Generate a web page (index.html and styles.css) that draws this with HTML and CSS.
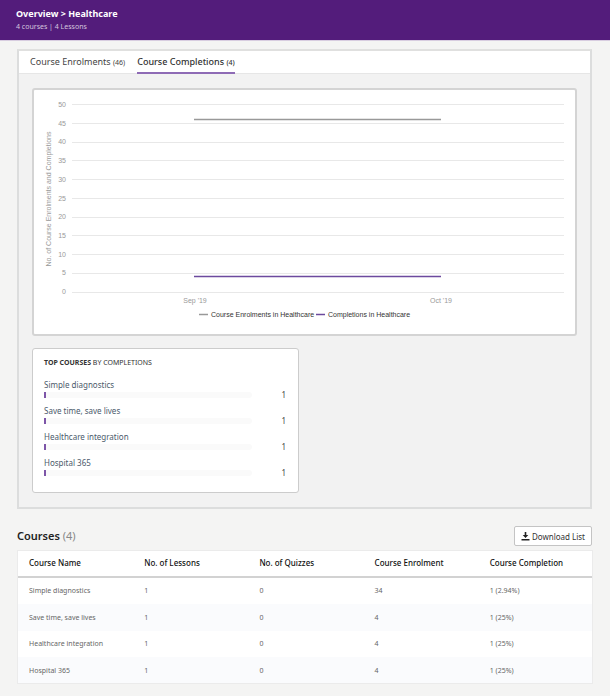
FILE: index.html
```html
<!DOCTYPE html>
<html lang="en">
<head>
<meta charset="utf-8">
<meta name="viewport" content="width=device-width, initial-scale=1">
<title>Overview &gt; Healthcare</title>
<link rel="stylesheet" href="styles.css">
</head>
<body>
<header class="page-header">
  <h1 class="page-title">Overview &gt; Healthcare</h1>
  <p class="page-meta">4 courses | 4 Lessons</p>
</header>
<main class="content">
  <section class="panel">
    <div class="tabs" role="tablist">
      <button class="tab" type="button" role="tab" aria-selected="false">Course Enrolments <small>(46)</small></button>
      <button class="tab tab-active" type="button" role="tab" aria-selected="true">Course Completions <small>(4)</small></button>
    </div>
    <div class="panel-body">
      <div class="card">
        <svg class="chart" viewBox="0 0 541 244" role="img" aria-label="Course enrolments and completions by month">
          <g class="grid">
            <path d="M38 14.5H530M38 33.5H530M38 52.5H530M38 70.5H530M38 89.5H530M38 108.5H530M38 127.5H530M38 145.5H530M38 164.5H530M38 183.5H530M38 202.5H530"/>
          </g>
          <g class="axis" text-anchor="end">
            <text x="32" y="17">50</text>
            <text x="32" y="36">45</text>
            <text x="32" y="54">40</text>
            <text x="32" y="73">35</text>
            <text x="32" y="92">30</text>
            <text x="32" y="111">25</text>
            <text x="32" y="129">20</text>
            <text x="32" y="148">15</text>
            <text x="32" y="167">10</text>
            <text x="32" y="185">5</text>
            <text x="32" y="204">0</text>
          </g>
          <g class="axis" text-anchor="middle">
            <text x="161" y="213">Sep '19</text>
            <text x="407" y="213">Oct '19</text>
            <text transform="translate(17 109) rotate(-90)">No. of Course Enrolments and Completions</text>
          </g>
          <path class="line-enrol" d="M160 29.5H407"/>
          <path class="line-complete" d="M160 186.5H407"/>
          <path class="line-enrol" d="M165 224.5H174"/>
          <path class="line-complete" d="M282 224.5H291"/>
          <g class="legend">
            <text x="177" y="227">Course Enrolments in Healthcare</text>
            <text x="294" y="227">Completions in Healthcare</text>
          </g>
        </svg>
      </div>
      <section class="card top-courses">
        <h2 class="top-title"><strong>TOP COURSES</strong> BY COMPLETIONS</h2>
        <ul class="top-list">
          <li class="top-item"><span class="top-name">Simple diagnostics</span><span class="bar"></span><span class="top-count">1</span></li>
          <li class="top-item"><span class="top-name">Save time, save lives</span><span class="bar"></span><span class="top-count">1</span></li>
          <li class="top-item"><span class="top-name">Healthcare integration</span><span class="bar"></span><span class="top-count">1</span></li>
          <li class="top-item"><span class="top-name">Hospital 365</span><span class="bar"></span><span class="top-count">1</span></li>
        </ul>
      </section>
    </div>
  </section>
  <section class="courses">
    <div class="courses-head">
      <h2 class="courses-title">Courses <span>(4)</span></h2>
      <button class="download" type="button">
        <svg class="download-icon" viewBox="0 0 9 9" aria-hidden="true"><path d="M3.7 0h1.6v3h2L4.5 6 1.7 3h2zM.5 7h8v1.5h-8z"/></svg>
        Download List
      </button>
    </div>
    <table class="table">
      <thead>
        <tr><th scope="col">Course Name</th><th scope="col">No. of Lessons</th><th scope="col">No. of Quizzes</th><th scope="col">Course Enrolment</th><th scope="col">Course Completion</th></tr>
      </thead>
      <tbody>
        <tr><td>Simple diagnostics</td><td>1</td><td>0</td><td>34</td><td>1 (2.94%)</td></tr>
        <tr><td>Save time, save lives</td><td>1</td><td>0</td><td>4</td><td>1 (25%)</td></tr>
        <tr><td>Healthcare integration</td><td>1</td><td>0</td><td>4</td><td>1 (25%)</td></tr>
        <tr><td>Hospital 365</td><td>1</td><td>0</td><td>4</td><td>1 (25%)</td></tr>
      </tbody>
    </table>
  </section>
</main>
</body>
</html>
```
FILE: styles.css
```css
* { box-sizing: border-box; }
body {
  margin: 0;
  background: #f4f4f3;
  color: #333;
  font-family: "Noto Sans", "Open Sans", sans-serif;
  font-size: 8px;
  line-height: 12px;
}
h1, h2, p, ul { margin: 0; padding: 0; }
button { font-family: inherit; color: inherit; cursor: pointer; }
.page-header {
  padding: 8px 16px 7px;
  background: #531c7b;
  color: #fff;
  border-bottom: 1px solid #d8cde0;
}
.page-title { font-size: 9px; font-weight: 700; line-height: 12px; }
.page-meta { font-size: 7px; line-height: 13px; color: #d5c5df; }
.content { padding: 8px 17px 12px; }
.panel {
  margin-right: 1px;
  border: 2px solid #dcdddd;
  border-top-color: #e0e0df;
  background: #f2f2f2;
}
.tabs {
  display: flex;
  gap: 12px;
  height: 23px;
  padding: 0 11px;
  background: #fff;
  border-bottom: 1px solid #e6e6e6;
}
.tab {
  padding: 2px 0 0;
  border: 0;
  border-bottom: 2px solid transparent;
  margin-bottom: -1px;
  background: none;
  font-size: 9px;
  line-height: 12px;
  color: #444;
}
.tab small { font-size: 7px; }
.tab-active { border-bottom-color: #8e6bb5; font-weight: 500; color: #333; }
.panel-body { padding: 14px 13px; }
.card { background: #fff; border: 2px solid #d4d4d4; border-radius: 3px; }
.chart { display: block; width: 100%; height: auto; font-family: "Liberation Sans", Arial, sans-serif; font-size: 7px; }
.grid { stroke: #e8e8e8; }
.axis { fill: #999; }
.legend { fill: #333; }
.line-enrol { stroke: #999; stroke-width: 1.5; }
.line-complete { stroke: #6c4a9e; stroke-width: 1.5; }
.top-courses { width: 49%; margin-top: 12px; padding: 8px 12px 10px 11px; border-width: 1px; border-color: #ccc; }
.top-title { font-size: 7px; font-weight: 400; line-height: 12px; margin-bottom: 9px; }
.top-list { list-style: none; }
.top-item {
  display: grid;
  grid-template-columns: 1fr 34px;
  grid-template-rows: 14px 6px;
  align-items: center;
  height: 26px;
}
.top-name { grid-column: 1 / -1; line-height: 12px; color: #4b5a6b; }
.bar { height: 6px; border-left: 2px solid #7d55a8; border-radius: 0 3px 3px 0; background: #fafafa; }
.top-count { text-align: right; color: #444; line-height: 8px; }
.courses { margin-top: 17px; }
.courses-head { display: flex; justify-content: space-between; align-items: center; margin: 0 1px 4px 0; }
.courses-title { font-size: 11px; line-height: 16px; font-weight: 600; color: #222; }
.courses-title span { font-weight: 400; color: #888; }
.download {
  display: flex;
  align-items: center;
  gap: 2px;
  height: 20px;
  padding: 0 6px;
  border: 1px solid #c4c4c4;
  border-radius: 2px;
  background: #fff;
  font-size: 8px;
}
.download-icon { width: 9px; height: 9px; fill: #222; }
.table {
  width: 100%;
  table-layout: fixed;
  border-spacing: 0;
  background: #fff;
  outline: 1px solid #ebebeb;
  outline-offset: -1px;
}
.table th, .table td { padding: 0 0 0 12px; text-align: left; }
.table th { height: 28px; font-size: 8px; font-weight: 500; color: #111; border-bottom: 2px solid #d2d2d2; }
.table td { height: 26px; font-size: 7px; color: #666; }
.table tr:nth-child(even) td { height: 27px; background: #fafbfd; }
```
